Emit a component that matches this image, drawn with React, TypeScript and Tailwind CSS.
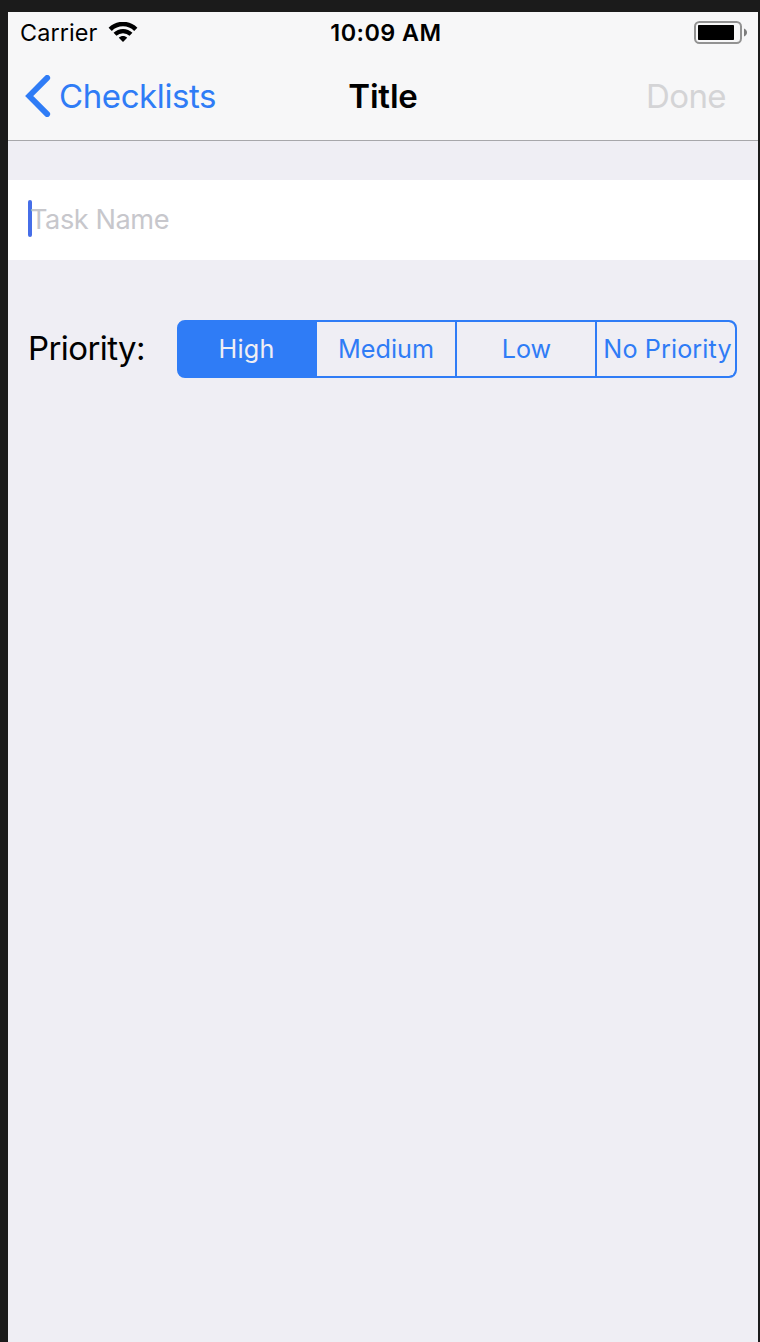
import React from "react";

function WifiIcon() {
  return (
    <svg width="30" height="20" viewBox="0 0 30 20" className="block">
      <path d="M2.2 7.3 C9.4 0.3 20.6 0.3 27.8 7.3" fill="none" stroke="#000" strokeWidth="4.6" />
      <path d="M7 12.3 C11.5 8 18.5 8 23 12.3" fill="none" stroke="#000" strokeWidth="4.2" />
      <path d="M10.8 15.7 C13 13.5 17 13.5 19.2 15.7 L15 20 Z" fill="#000" />
    </svg>
  );
}

function BatteryIcon() {
  return (
    <svg width="54" height="23" viewBox="0 0 54 23" className="block">
      <rect x="1" y="1" width="46" height="21" rx="4.5" fill="none" stroke="#929292" strokeWidth="2" />
      <rect x="4" y="4" width="36" height="15" rx="0.8" fill="#000" />
      <path d="M50 7.5 C54 9 54 14 50 15.5 Z" fill="#7d7d7d" />
    </svg>
  );
}

function StatusBar() {
  return (
    <div className="flex h-10 items-center text-[23.4px] leading-[40px] text-black">
      <div className="flex w-[250px] items-center pl-[12px]">
        <span className="w-[88px] pt-[2px] leading-[38px] tracking-[0.1px]">Carrier</span>
        <WifiIcon />
      </div>
      <div className="w-[256px] pt-[2px] text-center leading-[38px] font-semibold tracking-[0.45px]">10:09 AM</div>
      <div className="flex w-[244px] justify-end pr-[10px]">
        <BatteryIcon />
      </div>
    </div>
  );
}

function NavBar() {
  return (
    <div className="flex h-[88px] items-center text-[33px] leading-[88px]">
      <button className="flex w-[250px] items-center pl-[17px] text-[#2f7cf6]">
        <svg width="26" height="42" viewBox="0 0 26 42" className="block">
          <path
            d="M22.2 2.9 L4.2 21 L22.2 39.1"
            fill="none"
            stroke="currentColor"
            strokeWidth="5.8"
            strokeLinecap="round"
          />
        </svg>
        <span className="ml-[8px] pb-px tracking-[-0.4px]">Checklists</span>
      </button>
      <div className="w-[250px] pb-px text-center font-semibold tracking-[-0.2px]">Title</div>
      <div className="w-[250px] pr-[32px] pb-px text-right tracking-[-0.6px] text-[#d4d4d6]">Done</div>
    </div>
  );
}

export default function App() {
  return (
    <div className="h-[1342px] w-[760px] overflow-hidden bg-[#1b1b1b] pt-3 pl-2 font-['Inter',sans-serif]">
      <div className="flex h-[1330px] w-[750px] flex-col bg-[#efeef4] text-black">
        <header className="h-[129px] border-b border-[#a7a7aa] bg-[#f7f7f8]">
          <StatusBar />
          <NavBar />
        </header>
        <div className="mt-[39px] flex h-20 items-center bg-white pl-5">
          <span className="mb-[3px] h-[37px] w-1 rounded-full bg-[#466ee8]" />
          <span className="-ml-[2px] text-[27.2px] leading-[80px] tracking-[-0.45px] text-[#c7c7cc]">Task Name</span>
        </div>
        <div className="mt-[60px] flex h-[58px] items-center pl-5">
          <span className="w-[149px] pb-[2px] text-[33px] leading-[56px] tracking-[-0.6px]">Priority:</span>
          <div className="flex h-[58px] w-[560px] overflow-hidden rounded-[8px] border-2 border-[#2f7cf6] bg-[#2f7cf6] text-center text-[25.2px] leading-[54px] whitespace-nowrap text-[#2f7cf6]">
            <div className="w-[138px] pr-[3px] text-[#efeef4]">
              <span className="tracking-[0.2px]">High</span>
            </div>
            <div className="w-[140px] border-r-2 border-[#2f7cf6] bg-[#efeef4]">
              <span>Medium</span>
            </div>
            <div className="w-[140px] border-r-2 border-[#2f7cf6] bg-[#efeef4] pl-px">
              <span>Low</span>
            </div>
            <div className="w-[138px] rounded-r-[6px] bg-[#efeef4] pl-[3px]">
              <span className="tracking-[0.1px]">No Priority</span>
            </div>
          </div>
        </div>
      </div>
    </div>
  );
}
